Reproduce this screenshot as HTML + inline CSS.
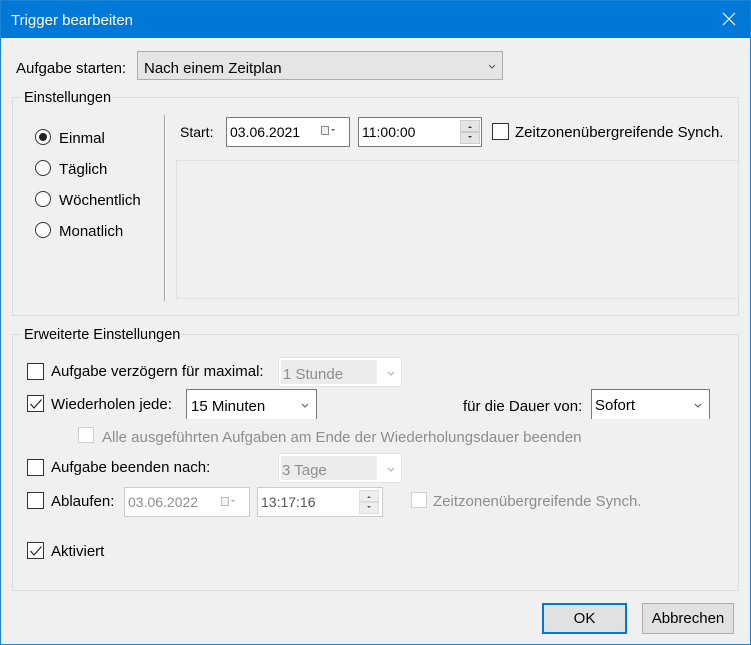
<!DOCTYPE html>
<html><head><meta charset="utf-8"><style>
*{box-sizing:border-box;margin:0;padding:0}
body{width:751px;height:645px;overflow:hidden;background:#f0f0f0;font-family:"Liberation Sans",sans-serif;font-size:15px;color:#000;position:relative}
.a{position:absolute;white-space:nowrap}
span.a{margin-top:2px}
.frame{position:absolute;left:0;top:0;width:751px;height:645px;border:1px solid #1883d7;pointer-events:none}
.title{position:absolute;left:0;top:0;width:751px;height:38px;background:#0078d7;color:#fff;font-size:15px}
.grp{position:absolute;border:1px solid #dcdcdc}
.lg{position:absolute;background:#f0f0f0;padding:0 2px;font-size:14.5px;margin-top:1px}
.box{position:absolute;background:#fff;border:1px solid #7a7a7a;padding-left:3px;line-height:28px;font-size:14px}
.dis{border-color:#ccc;color:#8d8d8d}
.cb{position:absolute;width:17px;height:17px;border:1px solid #333;background:#fff}
.cb.d{border-color:#cfcfcf}
.rd{position:absolute;width:16px;height:16px;border:1px solid #333;border-radius:50%;background:#fff}
.gray{color:#8d8d8d}
.btn{position:absolute;background:#e1e1e1;border:1px solid #adadad;text-align:center;line-height:30px}
</style></head><body>
<div class="title"><span class="a" style="left:11px;top:10px">Trigger bearbeiten</span>
<svg class="a" style="left:722px;top:12px" width="14" height="14"><path d="M1 1L13 13M13 1L1 13" stroke="#fff" stroke-width="1.2"/></svg></div>

<span class="a" style="left:16px;top:58px">Aufgabe starten:</span>
<div class="a" style="left:137px;top:51px;width:366px;height:29px;background:#e5e5e5;border:1px solid #adadad"><span class="a" style="left:6px;top:6px">Nach einem Zeitplan</span><svg class="a" style="left:350px;top:12px" width="8" height="5"><path d="M1 1L4 4L7 1" stroke="#555" fill="none"/></svg></div>

<div class="grp" style="left:12px;top:97px;width:727px;height:219px"></div>
<span class="lg" style="left:22px;top:89px">Einstellungen</span>
<div class="rd" style="left:35px;top:129px"></div><div class="a" style="left:39px;top:133px;width:8px;height:8px;border-radius:50%;background:#222"></div>
<span class="a" style="left:59px;top:128px">Einmal</span>
<div class="rd" style="left:35px;top:160px"></div><span class="a" style="left:59px;top:159px">Täglich</span>
<div class="rd" style="left:35px;top:191px"></div><span class="a" style="left:59px;top:190px">Wöchentlich</span>
<div class="rd" style="left:35px;top:222px"></div><span class="a" style="left:59px;top:221px">Monatlich</span>
<div class="a" style="left:164px;top:115px;width:2px;height:186px;background:#a0a0a0;border-right:1px solid #fff"></div>
<span class="a" style="left:180px;top:122px;font-size:14px">Start:</span>
<div class="box" style="left:226px;top:117px;width:124px;height:30px">03.06.2021</div>
<svg class="a" style="left:321px;top:126px" width="14" height="10"><rect x="0.5" y="0.5" width="7" height="8" fill="#eee" stroke="#888"/><path d="M10 3h4l-2 2z" fill="#555"/></svg>
<div class="box" style="left:358px;top:117px;width:124px;height:30px">11:00:00</div>
<div class="a" style="left:460px;top:120px;width:20px;height:12px;background:#e5e5e5;border:1px solid #ccc"></div>
<div class="a" style="left:460px;top:132px;width:20px;height:12px;background:#e5e5e5;border:1px solid #ccc"></div>
<svg class="a" style="left:466px;top:124px" width="8" height="16"><path d="M2 4h4l-2-2z M2 12h4l-2 2z" fill="#333"/></svg>
<div class="cb" style="left:492px;top:123px"></div>
<span class="a" style="left:515px;top:122px">Zeitzonenübergreifende Synch.</span>
<div class="a" style="left:176px;top:160px;width:563px;height:139px;border:1px solid #e0e0e0"></div>

<div class="grp" style="left:12px;top:334px;width:727px;height:257px"></div>
<span class="lg" style="left:22px;top:326px">Erweiterte Einstellungen</span>

<div class="cb" style="left:27px;top:363px"></div>
<span class="a" style="left:51px;top:361px">Aufgabe verzögern für maximal:</span>
<div class="a" style="left:278px;top:357px;width:124px;height:30px;background:#fff;border:1px solid #e3e3e3"><div class="a" style="left:2px;top:2px;width:96px;height:24px;background:#ececec"></div><span class="a gray" style="left:4px;top:6px">1 Stunde</span><svg class="a" style="left:108px;top:13px" width="8" height="5"><path d="M1 1L4 4L7 1" stroke="#aaa" fill="none"/></svg></div>

<div class="cb" style="left:27px;top:395px"></div>
<svg class="a" style="left:29px;top:398px" width="14" height="12"><path d="M1.5 6L5 10L12.5 1.5" stroke="#222" stroke-width="1.2" fill="none"/></svg>
<span class="a" style="left:51px;top:394px">Wiederholen jede:</span>
<div class="a" style="left:186px;top:389px;width:131px;height:30px;background:#fff;border:1px solid #7a7a7a;border-bottom:none"><span class="a" style="left:4px;top:6px">15 Minuten</span><svg class="a" style="left:114px;top:13px" width="8" height="5"><path d="M1 1L4 4L7 1" stroke="#555" fill="none"/></svg></div>
<span class="a" style="left:463px;top:396px">für die Dauer von:</span>
<div class="a" style="left:591px;top:389px;width:119px;height:30px;background:#fff;border:1px solid #7a7a7a;border-bottom:none"><span class="a" style="left:3px;top:5px">Sofort</span><svg class="a" style="left:102px;top:13px" width="8" height="5"><path d="M1 1L4 4L7 1" stroke="#555" fill="none"/></svg></div>

<div class="cb d" style="left:78px;top:427px;width:16px;height:16px"></div>
<span class="a gray" style="left:102px;top:427px">Alle ausgeführten Aufgaben am Ende der Wiederholungsdauer beenden</span>

<div class="cb" style="left:27px;top:459px"></div>
<span class="a" style="left:51px;top:457px">Aufgabe beenden nach:</span>
<div class="a" style="left:278px;top:453px;width:124px;height:30px;background:#fff;border:1px solid #e3e3e3"><div class="a" style="left:2px;top:2px;width:96px;height:24px;background:#ececec"></div><span class="a gray" style="left:3px;top:6px">3 Tage</span><svg class="a" style="left:108px;top:13px" width="8" height="5"><path d="M1 1L4 4L7 1" stroke="#aaa" fill="none"/></svg></div>

<div class="cb" style="left:27px;top:492px"></div>
<span class="a" style="left:51px;top:491px">Ablaufen:</span>
<div class="box dis" style="left:124px;top:487px;width:126px;height:30px">03.06.2022</div>
<svg class="a" style="left:221px;top:497px" width="14" height="10"><rect x="0.5" y="0.5" width="7" height="8" fill="#f4f4f4" stroke="#bbb"/><path d="M10 3h4l-2 2z" fill="#aaa"/></svg>
<div class="box dis" style="left:257px;top:487px;width:126px;height:30px;color:#555">13:17:16</div>
<div class="a" style="left:359px;top:490px;width:20px;height:12px;background:#eee;border:1px solid #ddd"></div>
<div class="a" style="left:359px;top:502px;width:20px;height:12px;background:#eee;border:1px solid #ddd"></div>
<svg class="a" style="left:365px;top:494px" width="8" height="16"><path d="M2 4h4l-2-2z M2 12h4l-2 2z" fill="#555"/></svg>
<div class="cb d" style="left:411px;top:492px;width:16px;height:16px"></div>
<span class="a gray" style="left:433px;top:491px">Zeitzonenübergreifende Synch.</span>

<div class="cb" style="left:27px;top:542px"></div>
<svg class="a" style="left:29px;top:545px" width="14" height="12"><path d="M1.5 6L5 10L12.5 1.5" stroke="#222" stroke-width="1.2" fill="none"/></svg>
<span class="a" style="left:51px;top:541px">Aktiviert</span>

<div class="btn" style="left:542px;top:603px;width:85px;height:31px;border:2px solid #0078d7;line-height:27px">OK</div>
<div class="btn" style="left:642px;top:603px;width:92px;height:31px">Abbrechen</div>
<div class="frame"></div>
</body></html>
